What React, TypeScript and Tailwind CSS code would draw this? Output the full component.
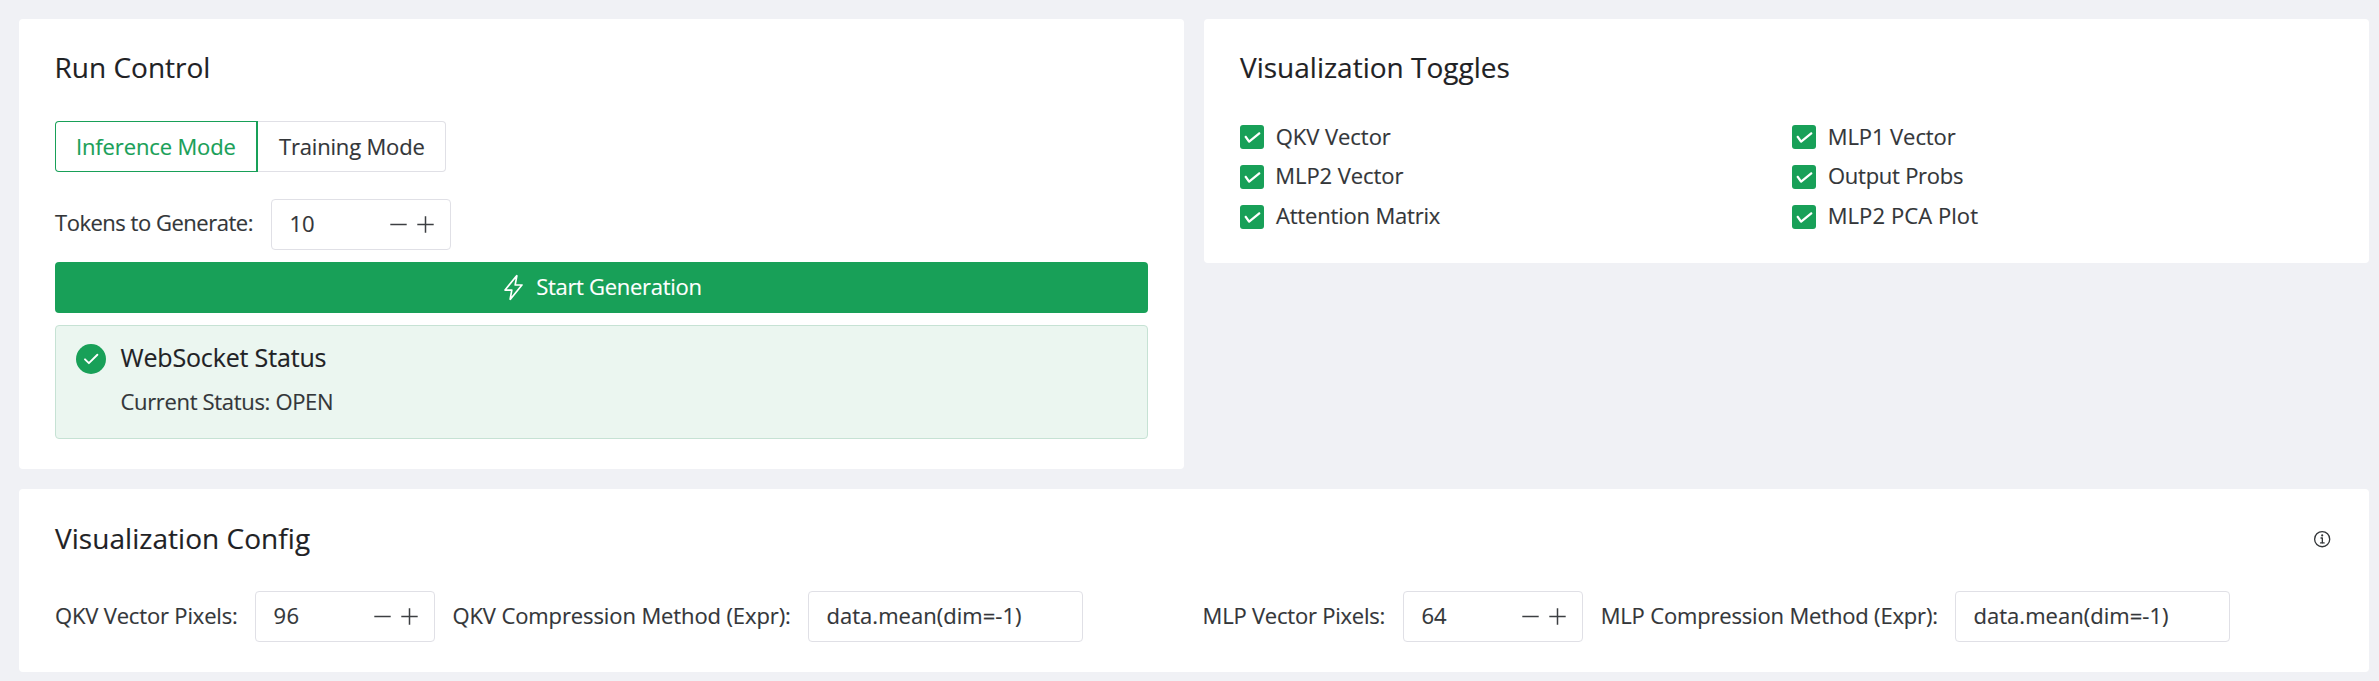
import type { ReactNode } from "react";

function Card({ className, children }: { className: string; children: ReactNode }) {
  return <section className={`rounded-[4px] bg-white px-9 ${className}`}>{children}</section>;
}

function CardTitle({ className = "", children }: { className?: string; children: ReactNode }) {
  return <h2 className={`h-[42px] whitespace-nowrap text-[28px] leading-[42px] text-[#1f2225] ${className}`}>{children}</h2>;
}

function NumberInput({ value, className = "" }: { value: string; className?: string }) {
  return (
    <div className="flex h-[51px] w-[180px] shrink-0 items-start rounded-[4px] border border-[#e0e0e6] pl-[17.5px] pt-2">
      <span className={`w-[100.5px] leading-[30px] ${className}`}>{value}</span>
      <svg className="mt-[8px] h-[17px] w-[17px]" viewBox="0 0 17 17" stroke="#3c3f42" strokeWidth="1.5">
        <path d="M0.3 8.5h16.4" />
      </svg>
      <svg className="ml-[10px] mt-[8px] h-[17px] w-[17px]" viewBox="0 0 17 17" stroke="#3c3f42" strokeWidth="1.5">
        <path d="M0.3 8.5h16.4M8.5 0.3v16.4" />
      </svg>
    </div>
  );
}

function TextInput({ value }: { value: string }) {
  return (
    <div className="h-[51px] w-[275px] shrink-0 rounded-[4px] border border-[#e0e0e6] pl-[17.5px] pt-2 leading-[30px] tracking-[0.03px]">
      {value}
    </div>
  );
}

function Toggle({ label, className }: { label: string; className: string }) {
  return (
    <label className="flex h-10 items-start">
      <span className="mt-[4px] flex h-6 w-6 shrink-0 items-center justify-center rounded-[3px] bg-[#18a058]">
        <svg className="h-[21px] w-[21px]" viewBox="0 0 64 64" fill="white">
          <path d="M50.42,16.76L22.34,39.45l-8.1-11.46c-1.12-1.58-3.3-1.96-4.88-0.84c-1.58,1.12-1.95,3.3-0.84,4.88l10.26,14.51c0.56,0.79,1.42,1.31,2.38,1.45c0.16,0.02,0.32,0.03,0.48,0.03c0.8,0,1.57-0.27,2.2-0.78l30.99-25.03c1.5-1.21,1.74-3.42,0.52-4.92C54.13,15.78,51.93,15.55,50.42,16.76z" />
        </svg>
      </span>
      <span className={`leading-[30px] ${className}`}>{label}</span>
    </label>
  );
}

export default function App() {
  return (
    <main className="flex h-[681px] w-full flex-col gap-5 overflow-hidden whitespace-nowrap bg-[#f0f1f5] pl-[19px] pr-[10px] pt-[19px] font-['Open_Sans','Noto_Sans',sans-serif] text-[22px] text-[#333639] [-webkit-text-stroke:0.15px]">
      <div className="flex items-start gap-5">
        <Card className="h-[450px] w-[1165px] shrink-0 pt-[27px]">
          <CardTitle className="-ml-[0.5px]">Run Control</CardTitle>
          <div className="mt-[33px] flex h-[51px]">
            <button className="w-[203px] rounded-l-[4px] border border-r-2 border-[#18a058] pb-px pl-5 text-left leading-[30px] tracking-[-0.14px] text-[#18a058]">
              Inference Mode
            </button>
            <button className="w-[188px] rounded-r-[4px] border border-l-0 border-[#e0e0e6] pb-px pl-[21px] text-left leading-[30px] tracking-[-0.18px]">
              Training Mode
            </button>
          </div>
          <div className="mt-[27px] flex h-[51px]">
            <span className="w-[216px] shrink-0 pt-2 leading-[30px] tracking-[-0.48px]">Tokens to Generate:</span>
            <NumberInput value="10" className="tracking-[-0.2px]" />
          </div>
          <button className="mt-3 flex h-[51px] w-full rounded-[4px] bg-[#18a058] pl-[445px] pt-[9px] text-white">
            <svg className="mt-[2.5px] h-[27px] w-[27px]" viewBox="0 0 512 512" fill="none" stroke="white" strokeWidth="32" strokeLinecap="round" strokeLinejoin="round">
              <path d="M315.27 33L96 304h128l-31.51 173.23a2.36 2.36 0 002.33 2.77h0a2.36 2.36 0 001.89-.95L416 208H288l31.66-173.25a2.45 2.45 0 00-2.44-2.75h0a2.42 2.42 0 00-1.95 1z" />
            </svg>
            <span className="ml-[9.2px] leading-[30px] tracking-[-0.3px]">Start Generation</span>
          </button>
          <div className="mt-3 flex h-[114px] rounded-[4px] border border-[#c6e2d4] bg-[#ebf6f0] pl-5">
            <svg className="mt-[18px] h-[30px] w-[30px] shrink-0" viewBox="4 4 40 40">
              <circle cx="24" cy="24" r="20" fill="#18a058" />
              <path d="M16 24.4l5.2 5.2L32.5 18.3" fill="none" stroke="white" strokeWidth="2.5" strokeLinecap="round" strokeLinejoin="round" />
            </svg>
            <div className="ml-[14.5px] pt-[14px]">
              <div className="text-[25px] leading-[34px] tracking-[-0.16px] text-[#1f2225]">WebSocket Status</div>
              <div className="mt-3 leading-[30px] tracking-[-0.33px]">Current Status: OPEN</div>
            </div>
          </div>
        </Card>

        <Card className="h-[244px] w-[1165px] shrink-0 pt-[27px]">
          <CardTitle>Visualization Toggles</CardTitle>
          <div className="mt-[33px] grid grid-cols-[552px_1fr]">
            <Toggle label="QKV Vector" className="pl-[11.7px] tracking-[-0.04px]" />
            <Toggle label="MLP1 Vector" className="pl-[11.7px] tracking-[-0.08px]" />
            <Toggle label="MLP2 Vector" className="-mt-px pl-[11.3px] tracking-[-0.08px]" />
            <Toggle label="Output Probs" className="-mt-px pl-3 tracking-[-0.26px]" />
            <Toggle label="Attention Matrix" className="-mt-px pl-3 tracking-[-0.19px]" />
            <Toggle label="MLP2 PCA Plot" className="-mt-px pl-[11.7px] tracking-[0.08px]" />
          </div>
        </Card>
      </div>

      <Card className="h-[183px] w-full shrink-0 pt-7">
        <div className="flex h-[42px] justify-between">
          <CardTitle className="tracking-[0.04px]">Visualization Config</CardTitle>
          <svg className="mt-[11.8px] h-[21px] w-[21px]" viewBox="0 0 512 512" fill="none" stroke="#333639" strokeWidth="32">
            <path d="M248 64C146.39 64 64 146.39 64 248s82.39 184 184 184 184-82.39 184-184S349.61 64 248 64z" strokeMiterlimit="10" />
            <path d="M220 220h32v116" strokeLinecap="round" strokeLinejoin="round" />
            <path d="M208 340h88" strokeLinecap="round" strokeMiterlimit="10" />
            <circle cx="248" cy="156" r="26" fill="#333639" stroke="none" />
          </svg>
        </div>
        <div className="mt-8 flex h-[51px]">
          <span className="w-[200px] shrink-0 pt-2 leading-[32px] tracking-[-0.17px]">QKV Vector Pixels:</span>
          <NumberInput value="96" className="tracking-[0.3px]" />
          <span className="w-[373px] shrink-0 pl-[17.5px] pt-2 leading-[32px] tracking-[-0.11px]">QKV Compression Method (Expr):</span>
          <TextInput value="data.mean(dim=-1)" />
          <span className="w-[320px] shrink-0 pl-[119.6px] pt-2 leading-[32px] tracking-[-0.22px]">MLP Vector Pixels:</span>
          <NumberInput value="64" />
          <span className="w-[372px] shrink-0 pl-[17.7px] pt-2 leading-[32px] tracking-[-0.17px]">MLP Compression Method (Expr):</span>
          <TextInput value="data.mean(dim=-1)" />
        </div>
      </Card>
    </main>
  );
}
